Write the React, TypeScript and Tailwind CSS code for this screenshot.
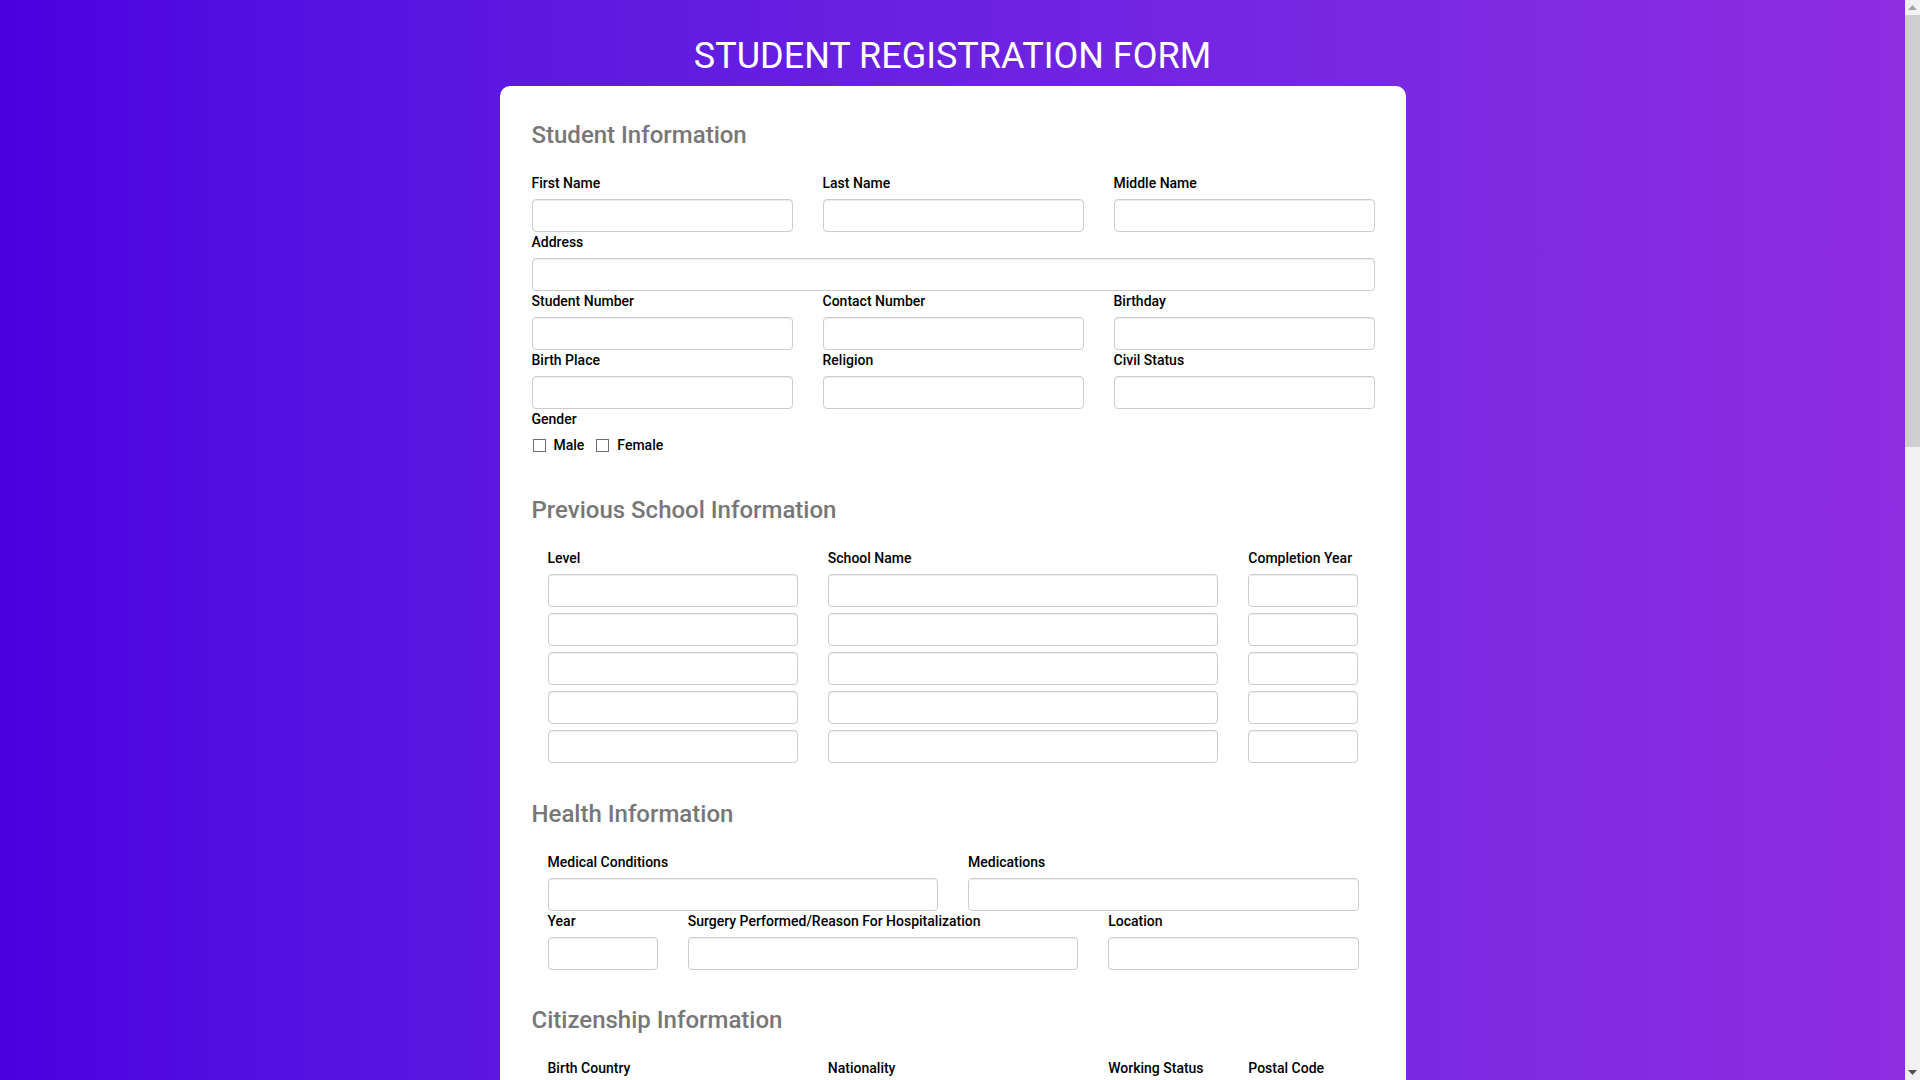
import React from "react";

function Label({ children }: { children: React.ReactNode }) {
  return (
    <div className="text-[14px] leading-[20px] font-medium text-black mb-[6px] whitespace-nowrap">
      {children}
    </div>
  );
}

function Field() {
  return (
    <input
      type="text"
      className="block w-full h-[33px] border border-[#cccccc] rounded-[4px] bg-white px-[8px] text-[14px] shadow-[inset_0_1px_1px_rgba(0,0,0,0.075)] outline-none"
    />
  );
}

function Cell({ label, span }: { label: string; span: string }) {
  return (
    <div className={span}>
      <Label>{label}</Label>
      <Field />
    </div>
  );
}

function Heading({ children, className }: { children: React.ReactNode; className?: string }) {
  return (
    <h2 className={"text-[24px] leading-[28px] font-medium text-[#777777] " + (className ?? "")}>
      {children}
    </h2>
  );
}

function Check({ label, first }: { label: string; first?: boolean }) {
  return (
    <label className={"flex items-center h-[20px] " + (first ? "ml-[1px]" : "ml-[12px]")}>
      <span className="block w-[13px] h-[13px] border border-[#6f6f6f] bg-white" />
      <span className="ml-[8px] text-[14px] leading-[20px] font-medium text-black">{label}</span>
    </label>
  );
}

function TableHead({ children, span }: { children: React.ReactNode; span: string }) {
  return (
    <div className={span + " text-[14px] leading-[20px] font-medium text-black whitespace-nowrap"}>
      {children}
    </div>
  );
}

const fiveRows = [0, 1, 2, 3, 4];
const fourRows = [0, 1, 2, 3];

function Scrollbar() {
  return (
    <div className="sticky top-0 h-screen w-[15px] shrink-0 bg-[#f1f1f1] flex flex-col">
      <div className="h-[15px] flex items-center justify-center">
        <svg width="9" height="5" viewBox="0 0 9 5">
          <polygon points="0,5 4.5,0 9,5" fill="#a3a3a3" />
        </svg>
      </div>
      <div className="h-[432px] bg-[#cfcfcf]" />
      <div className="flex-1" />
      <div className="h-[15px] flex items-center justify-center">
        <svg width="9" height="5" viewBox="0 0 9 5">
          <polygon points="0,0 9,0 4.5,5" fill="#505050" />
        </svg>
      </div>
    </div>
  );
}

export default function App() {
  return (
    <div className="flex items-start w-full font-['Roboto',sans-serif]">
      <div className="flex-1 min-w-0 min-h-screen bg-linear-to-r from-[#4a00e0] to-[#8e2de2] pt-[38px] pb-[60px]">
        <h1 className="text-center text-white text-[36px] leading-[36px] font-normal mb-[12px]">
          STUDENT REGISTRATION FORM
        </h1>

        <div className="mx-auto w-[906px] bg-white rounded-[10px] pl-[32px] pr-[31px] pt-[35px] pb-[48px]">
          {/* Student Information */}
          <Heading>Student Information</Heading>
          <div className="mt-[24px] grid grid-cols-3 gap-x-[30px]">
            <Cell label="First Name" span="" />
            <Cell label="Last Name" span="" />
            <Cell label="Middle Name" span="" />
            <Cell label="Address" span="col-span-3" />
            <Cell label="Student Number" span="" />
            <Cell label="Contact Number" span="" />
            <Cell label="Birthday" span="" />
            <Cell label="Birth Place" span="" />
            <Cell label="Religion" span="" />
            <Cell label="Civil Status" span="" />
          </div>
          <Label>Gender</Label>
          <div className="flex items-center">
            <Check label="Male" first />
            <Check label="Female" />
          </div>

          {/* Previous School Information */}
          <Heading className="mt-[41px]">Previous School Information</Heading>
          <div className="mt-[24px] px-[16px]">
            <div className="grid grid-cols-6 gap-x-[30px] gap-y-[6px]">
              <TableHead span="col-span-2">Level</TableHead>
              <TableHead span="col-span-3">School Name</TableHead>
              <TableHead span="col-span-1">Completion Year</TableHead>
              {fiveRows.map((r) => (
                <React.Fragment key={r}>
                  <div className="col-span-2">
                    <Field />
                  </div>
                  <div className="col-span-3">
                    <Field />
                  </div>
                  <div className="col-span-1">
                    <Field />
                  </div>
                </React.Fragment>
              ))}
            </div>
          </div>

          {/* Health Information */}
          <Heading className="mt-[37px]">Health Information</Heading>
          <div className="mt-[24px] px-[16px]">
            <div className="grid grid-cols-6 gap-x-[30px]">
              <Cell label="Medical Conditions" span="col-span-3" />
              <Cell label="Medications" span="col-span-3" />
              <Cell label="Year" span="col-span-1" />
              <Cell label="Surgery Performed/Reason For Hospitalization" span="col-span-3" />
              <Cell label="Location" span="col-span-2" />
            </div>
          </div>

          {/* Citizenship Information */}
          <Heading className="mt-[36px]">Citizenship Information</Heading>
          <div className="mt-[24px] px-[16px]">
            <div className="grid grid-cols-6 gap-x-[30px]">
              <Cell label="Birth Country" span="col-span-2" />
              <Cell label="Nationality" span="col-span-2" />
              <Cell label="Working Status" span="col-span-1" />
              <Cell label="Postal Code" span="col-span-1" />
              <Cell label="Passport Number" span="col-span-2" />
              <Cell label="Visa Type" span="col-span-2" />
              <Cell label="Issue Date" span="col-span-1" />
              <Cell label="Expiry Date" span="col-span-1" />
            </div>
          </div>

          {/* Family Information */}
          <Heading className="mt-[36px]">Family Information</Heading>
          <div className="mt-[24px] px-[16px]">
            <div className="grid grid-cols-6 gap-x-[30px]">
              <Cell label="Father's Name" span="col-span-3" />
              <Cell label="Occupation" span="col-span-2" />
              <Cell label="Contact Number" span="col-span-1" />
              <Cell label="Mother's Name" span="col-span-3" />
              <Cell label="Occupation" span="col-span-2" />
              <Cell label="Contact Number" span="col-span-1" />
              <Cell label="Guardian's Name" span="col-span-3" />
              <Cell label="Relationship" span="col-span-2" />
              <Cell label="Contact Number" span="col-span-1" />
              <Cell label="Guardian's Address" span="col-span-6" />
            </div>
          </div>

          {/* Sibling Information */}
          <Heading className="mt-[36px]">Sibling Information</Heading>
          <div className="mt-[24px] px-[16px]">
            <div className="grid grid-cols-6 gap-x-[30px] gap-y-[6px]">
              <TableHead span="col-span-3">Name</TableHead>
              <TableHead span="col-span-1">Age</TableHead>
              <TableHead span="col-span-2">Occupation / School</TableHead>
              {fourRows.map((r) => (
                <React.Fragment key={r}>
                  <div className="col-span-3">
                    <Field />
                  </div>
                  <div className="col-span-1">
                    <Field />
                  </div>
                  <div className="col-span-2">
                    <Field />
                  </div>
                </React.Fragment>
              ))}
            </div>
          </div>

          {/* Emergency Contact */}
          <Heading className="mt-[37px]">Emergency Contact</Heading>
          <div className="mt-[24px] px-[16px]">
            <div className="grid grid-cols-6 gap-x-[30px]">
              <Cell label="Name" span="col-span-3" />
              <Cell label="Relationship" span="col-span-2" />
              <Cell label="Contact Number" span="col-span-1" />
              <Cell label="Address" span="col-span-6" />
              <Cell label="Email Address" span="col-span-3" />
              <Cell label="Alternate Contact Number" span="col-span-3" />
            </div>
          </div>

          {/* Other Information */}
          <Heading className="mt-[36px]">Other Information</Heading>
          <div className="mt-[24px] px-[16px]">
            <div className="grid grid-cols-6 gap-x-[30px]">
              <Cell label="Course / Program" span="col-span-3" />
              <Cell label="Year Level" span="col-span-1" />
              <Cell label="School Year" span="col-span-2" />
              <Cell label="Skills / Talents" span="col-span-6" />
              <Cell label="Hobbies" span="col-span-6" />
            </div>
          </div>

          <div className="mt-[40px] flex justify-center">
            <button
              type="button"
              className="h-[40px] px-[40px] rounded-[4px] bg-[#6a11e0] text-white text-[16px] font-medium"
            >
              Submit
            </button>
          </div>
        </div>
      </div>
      <Scrollbar />
    </div>
  );
}
